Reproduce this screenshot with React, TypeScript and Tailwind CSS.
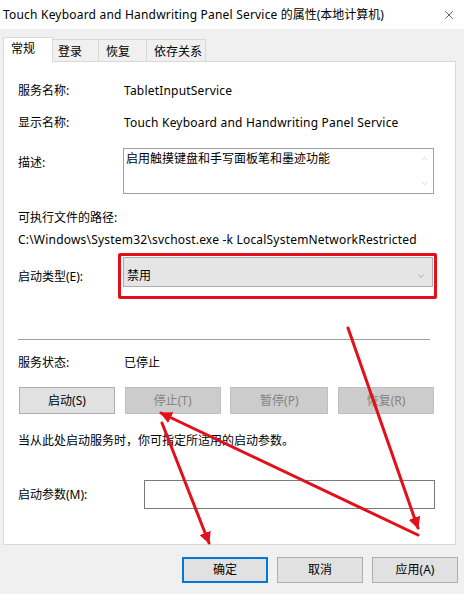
import { X, ChevronDown, ChevronUp } from 'lucide-react';

const FONT = { fontFamily: '"Noto Sans", "Noto Sans CJK SC", sans-serif' };

function Btn({ label, disabled = false, primary = false, w = 'w-[96px]', h = 'h-[27px]' }: { label: string; disabled?: boolean; primary?: boolean; w?: string; h?: string }) {
  if (disabled) {
    return (
      <div className={`${w} ${h} bg-[#cccccc] border border-[#bfbfbf] text-[#838383] flex items-center justify-center`}>
        {label}
      </div>
    );
  }
  return (
    <div
      className={`${w} ${h} bg-[#e1e1e1] flex items-center justify-center text-black ${primary ? 'border-2 border-[#0078d7]' : 'border border-[#adadad]'}`}
    >
      {label}
    </div>
  );
}

export default function App() {
  return (
    <div className="relative w-[464px] h-[594px] bg-[#f0f0f0] overflow-hidden text-[12px] leading-4 text-black" style={FONT}>
      {/* title bar */}
      <div className="h-[29px] bg-white flex items-center justify-between pl-[3px] pr-[8px]">
        <span className="text-[12px] text-black">
          <span className="tracking-[0.2px]">Touch Keyboard and Handwriting Panel Service</span> 的属性(本地计算机)
        </span>
        <X size={14} strokeWidth={1.2} color="#222" />
      </div>

      {/* tabs */}
      <div className="h-[32px] flex items-end pl-[3px]">
        <div className="relative z-10 w-[50px] h-[25px] -mb-px bg-white border border-b-0 border-[#d9d9d9] pl-[7px] pt-[3px]">常规</div>
        <div className="w-[46px] h-[22px] bg-[#f0f0f0] border-t border-r border-[#d9d9d9] pl-[5px] pt-[4px]">登录</div>
        <div className="w-[48px] h-[22px] bg-[#f0f0f0] border-t border-r border-[#d9d9d9] pl-[7px] pt-[4px]">恢复</div>
        <div className="w-[59px] h-[22px] bg-[#f0f0f0] border-t border-r border-[#d9d9d9] pl-[7px] pt-[4px]">依存关系</div>
      </div>

      {/* panel */}
      <div className="ml-[3px] w-[453px] h-[484px] bg-white border border-[#d9d9d9] px-[14px] pt-[21px]">
        <div className="flex">
          <div className="w-[106px]">服务名称:</div>
          <div className="tracking-[0.2px]">TabletInputService</div>
        </div>
        <div className="flex mt-[16px]">
          <div className="w-[106px]">显示名称:</div>
          <div className="tracking-[0.2px]">Touch Keyboard and Handwriting Panel Service</div>
        </div>
        <div className="flex items-start mt-[17px]">
          <div className="w-[105px] mt-[7px]">描述:</div>
          <div className="w-[311px] h-[46px] border border-[#a0a0a0] flex">
            <div className="flex-1 pl-[2px] pt-[2px]">启用触摸键盘和手写面板笔和墨迹功能</div>
            <div className="w-[17px] flex flex-col items-center justify-between py-[5px]">
              <ChevronUp size={9} strokeWidth={1.5} color="#bdbdbd" />
              <ChevronDown size={9} strokeWidth={1.5} color="#bdbdbd" />
            </div>
          </div>
        </div>
        <div className="mt-[16px]">可执行文件的路径:</div>
        <div className="mt-[6px] tracking-[0.2px]">C:\Windows\System32\svchost.exe -k LocalSystemNetworkRestricted</div>
        <div className="flex items-start mt-[9px]">
          <div className="w-[105px] mt-[12px]">启动类型(E):</div>
          <div className="w-[310px] h-[30px] bg-[#e5e5e5] border border-[#acacac] flex items-center justify-between pl-[3px] pr-[6px] pt-[8px]">
            <span>禁用</span>
            <ChevronDown size={10} strokeWidth={1.2} color="#666" />
          </div>
        </div>
        <div className="mt-[52px] w-[412px] h-px bg-[#a0a0a0]" />
        <div className="flex mt-[15px]">
          <div className="w-[106px]">服务状态:</div>
          <div>已停止</div>
        </div>
        <div className="flex justify-between ml-px w-[415px] mt-[16px]">
          <Btn label="启动(S)" />
          <Btn label="停止(T)" disabled />
          <Btn label="暂停(P)" disabled w="w-[98px]" />
          <Btn label="恢复(R)" disabled />
        </div>
        <div className="mt-[19px]">当从此处启动服务时，你可指定所适用的启动参数。</div>
        <div className="flex items-center mt-[31px]">
          <div className="w-[126px]">启动参数(M):</div>
          <div className="w-[291px] h-[29px] border border-[#7a7a7a] bg-white" />
        </div>
      </div>

      {/* bottom buttons */}
      <div className="flex justify-end gap-[9px] pr-[6px] mt-[12px]">
        <Btn label="确定" primary w="w-[86px]" h="h-[26px]" />
        <Btn label="取消" w="w-[86px]" h="h-[26px]" />
        <Btn label="应用(A)" w="w-[86px]" h="h-[26px]" />
      </div>

      {/* annotations */}
      <div className="absolute left-[118px] top-[253px] w-[319px] h-[46px] border-[3px] border-[#e3101c] rounded-[2px]" />
      <svg className="absolute inset-0 pointer-events-none" width="464" height="594" viewBox="0 0 464 594">
        <defs>
          <marker id="ah" viewBox="0 0 10 10" refX="9" refY="5" markerWidth="4" markerHeight="4" orient="auto">
            <path d="M0 0 L10 5 L0 10 Z" fill="#e3101c" />
          </marker>
        </defs>
        <g stroke="#e3101c" strokeWidth="3" strokeLinecap="round" fill="none">
          <line x1="348" y1="328" x2="418" y2="528" markerEnd="url(#ah)" />
          <line x1="418" y1="535" x2="161" y2="413" markerEnd="url(#ah)" />
          <line x1="162" y1="423" x2="209" y2="543" markerEnd="url(#ah)" />
        </g>
      </svg>
    </div>
  );
}
